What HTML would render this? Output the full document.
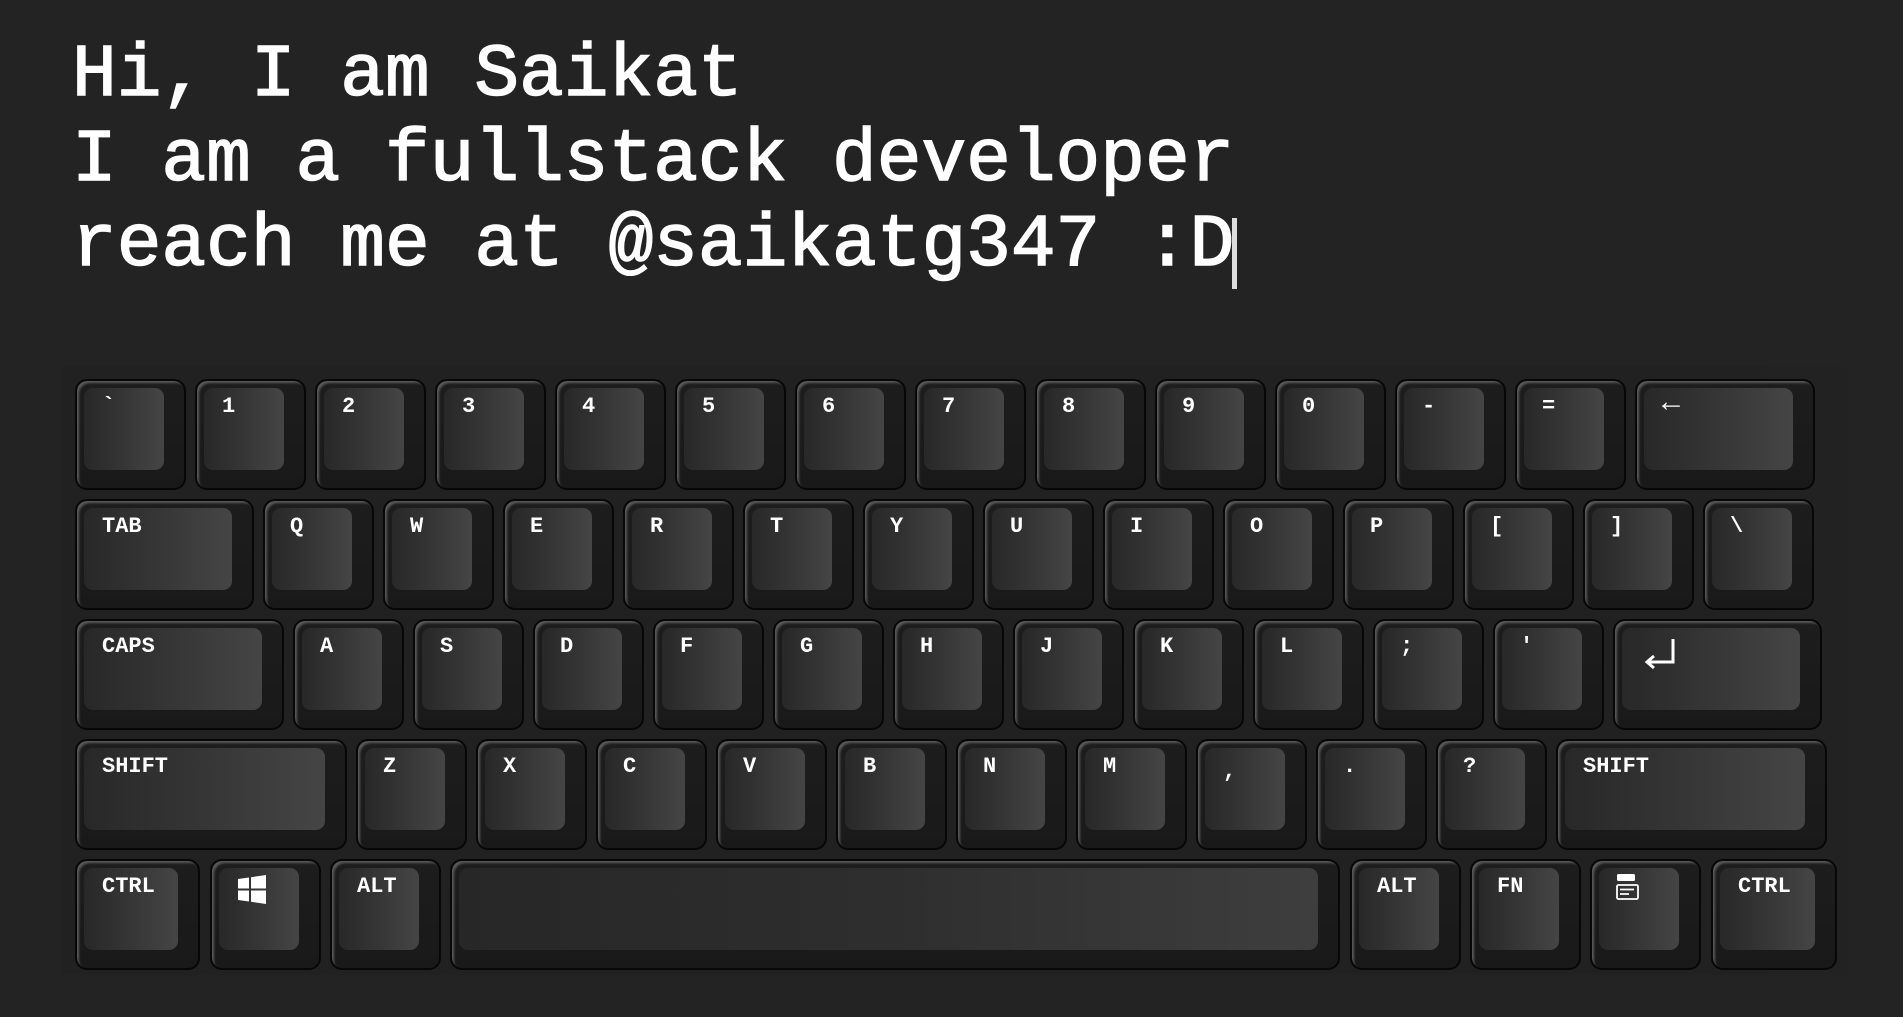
<!DOCTYPE html>
<html><head><meta charset="utf-8"><style>
html,body{margin:0;padding:0;background:#232323;width:1903px;height:1017px;overflow:hidden}
.txt{position:absolute;left:72px;top:34px;font-family:"Liberation Mono",monospace;font-weight:normal;font-size:74.5px;line-height:85px;color:#fff;white-space:pre;-webkit-text-stroke:1.5px #fff}
.cur{position:absolute;left:1232px;top:218px;width:5px;height:71px;background:#ddd}
.board{position:absolute;left:62px;top:366px;width:1808px;height:609px;background:linear-gradient(90deg,#212121 0%,#212121 93%,#232323 100%)}
.k{position:absolute;height:111px;box-sizing:border-box;border:2px solid #070707;border-radius:12px;background:linear-gradient(180deg,#1d1d1d,#191919);box-shadow:inset 3px 3px 2px -1px #5a5a5a}
.c{position:absolute;left:7px;top:7px;right:20px;bottom:18px;border-radius:9px;background:linear-gradient(90deg,#282828,#333 40%,#454545)}
.l{position:absolute;left:25px;top:15px;font-family:"Liberation Mono",monospace;font-weight:bold;font-size:22px;line-height:22px;color:#fff;white-space:pre}
</style></head><body>
<div class="txt">Hi, I am Saikat
I am a fullstack developer
reach me at @saikatg347 :D</div>
<div class="cur"></div>
<div class="board"></div>

<div class="k" style="top:379px;left:75px;width:111px"><div class="c"></div><div class="l">`</div></div>
<div class="k" style="top:379px;left:195px;width:111px"><div class="c"></div><div class="l">1</div></div>
<div class="k" style="top:379px;left:315px;width:111px"><div class="c"></div><div class="l">2</div></div>
<div class="k" style="top:379px;left:435px;width:111px"><div class="c"></div><div class="l">3</div></div>
<div class="k" style="top:379px;left:555px;width:111px"><div class="c"></div><div class="l">4</div></div>
<div class="k" style="top:379px;left:675px;width:111px"><div class="c"></div><div class="l">5</div></div>
<div class="k" style="top:379px;left:795px;width:111px"><div class="c"></div><div class="l">6</div></div>
<div class="k" style="top:379px;left:915px;width:111px"><div class="c"></div><div class="l">7</div></div>
<div class="k" style="top:379px;left:1035px;width:111px"><div class="c"></div><div class="l">8</div></div>
<div class="k" style="top:379px;left:1155px;width:111px"><div class="c"></div><div class="l">9</div></div>
<div class="k" style="top:379px;left:1275px;width:111px"><div class="c"></div><div class="l">0</div></div>
<div class="k" style="top:379px;left:1395px;width:111px"><div class="c"></div><div class="l">-</div></div>
<div class="k" style="top:379px;left:1515px;width:111px"><div class="c"></div><div class="l">=</div></div>
<div class="k" style="top:379px;left:1635px;width:180px"><div class="c"></div><div class="l" style="font-size:30px;font-weight:normal;top:12px">←</div></div>

<div class="k" style="top:499px;left:75px;width:179px"><div class="c"></div><div class="l">TAB</div></div>
<div class="k" style="top:499px;left:263px;width:111px"><div class="c"></div><div class="l">Q</div></div>
<div class="k" style="top:499px;left:383px;width:111px"><div class="c"></div><div class="l">W</div></div>
<div class="k" style="top:499px;left:503px;width:111px"><div class="c"></div><div class="l">E</div></div>
<div class="k" style="top:499px;left:623px;width:111px"><div class="c"></div><div class="l">R</div></div>
<div class="k" style="top:499px;left:743px;width:111px"><div class="c"></div><div class="l">T</div></div>
<div class="k" style="top:499px;left:863px;width:111px"><div class="c"></div><div class="l">Y</div></div>
<div class="k" style="top:499px;left:983px;width:111px"><div class="c"></div><div class="l">U</div></div>
<div class="k" style="top:499px;left:1103px;width:111px"><div class="c"></div><div class="l">I</div></div>
<div class="k" style="top:499px;left:1223px;width:111px"><div class="c"></div><div class="l">O</div></div>
<div class="k" style="top:499px;left:1343px;width:111px"><div class="c"></div><div class="l">P</div></div>
<div class="k" style="top:499px;left:1463px;width:111px"><div class="c"></div><div class="l">[</div></div>
<div class="k" style="top:499px;left:1583px;width:111px"><div class="c"></div><div class="l">]</div></div>
<div class="k" style="top:499px;left:1703px;width:111px"><div class="c"></div><div class="l">\</div></div>

<div class="k" style="top:619px;left:75px;width:209px"><div class="c"></div><div class="l">CAPS</div></div>
<div class="k" style="top:619px;left:293px;width:111px"><div class="c"></div><div class="l">A</div></div>
<div class="k" style="top:619px;left:413px;width:111px"><div class="c"></div><div class="l">S</div></div>
<div class="k" style="top:619px;left:533px;width:111px"><div class="c"></div><div class="l">D</div></div>
<div class="k" style="top:619px;left:653px;width:111px"><div class="c"></div><div class="l">F</div></div>
<div class="k" style="top:619px;left:773px;width:111px"><div class="c"></div><div class="l">G</div></div>
<div class="k" style="top:619px;left:893px;width:111px"><div class="c"></div><div class="l">H</div></div>
<div class="k" style="top:619px;left:1013px;width:111px"><div class="c"></div><div class="l">J</div></div>
<div class="k" style="top:619px;left:1133px;width:111px"><div class="c"></div><div class="l">K</div></div>
<div class="k" style="top:619px;left:1253px;width:111px"><div class="c"></div><div class="l">L</div></div>
<div class="k" style="top:619px;left:1373px;width:111px"><div class="c"></div><div class="l">;</div></div>
<div class="k" style="top:619px;left:1493px;width:111px"><div class="c"></div><div class="l">'</div></div>
<div class="k" style="top:619px;left:1613px;width:209px"><div class="c"></div>
<svg style="position:absolute;left:28px;top:16px" width="34" height="32" viewBox="0 0 34 32"><path d="M30 2 V25 H5 M11 19 L4 25 L11 31" fill="none" stroke="#fff" stroke-width="3"/></svg></div>

<div class="k" style="top:739px;left:75px;width:272px"><div class="c"></div><div class="l">SHIFT</div></div>
<div class="k" style="top:739px;left:356px;width:111px"><div class="c"></div><div class="l">Z</div></div>
<div class="k" style="top:739px;left:476px;width:111px"><div class="c"></div><div class="l">X</div></div>
<div class="k" style="top:739px;left:596px;width:111px"><div class="c"></div><div class="l">C</div></div>
<div class="k" style="top:739px;left:716px;width:111px"><div class="c"></div><div class="l">V</div></div>
<div class="k" style="top:739px;left:836px;width:111px"><div class="c"></div><div class="l">B</div></div>
<div class="k" style="top:739px;left:956px;width:111px"><div class="c"></div><div class="l">N</div></div>
<div class="k" style="top:739px;left:1076px;width:111px"><div class="c"></div><div class="l">M</div></div>
<div class="k" style="top:739px;left:1196px;width:111px"><div class="c"></div><div class="l" style="top:20px">,</div></div>
<div class="k" style="top:739px;left:1316px;width:111px"><div class="c"></div><div class="l">.</div></div>
<div class="k" style="top:739px;left:1436px;width:111px"><div class="c"></div><div class="l">?</div></div>
<div class="k" style="top:739px;left:1556px;width:271px"><div class="c"></div><div class="l">SHIFT</div></div>

<div class="k" style="top:859px;left:75px;width:125px"><div class="c"></div><div class="l">CTRL</div></div>
<div class="k" style="top:859px;left:210px;width:111px"><div class="c"></div>
<svg style="position:absolute;left:25px;top:14px" width="30" height="30" viewBox="0 0 30 30"><path d="M1 4 L12 2.5 V13.5 H1 Z M14 2.2 L29 0 V13.5 H14 Z M1 15.5 H12 V26.5 L1 25 Z M14 15.5 H29 V29 L14 26.8 Z" fill="#fff"/></svg></div>
<div class="k" style="top:859px;left:330px;width:111px"><div class="c"></div><div class="l">ALT</div></div>
<div class="k" style="top:859px;left:450px;width:890px"><div class="c" style="background:linear-gradient(90deg,#272727,#2e2e2e 50%,#3e3e3e)"></div></div>
<div class="k" style="top:859px;left:1350px;width:111px"><div class="c"></div><div class="l">ALT</div></div>
<div class="k" style="top:859px;left:1470px;width:111px"><div class="c"></div><div class="l">FN</div></div>
<div class="k" style="top:859px;left:1590px;width:111px"><div class="c"></div>
<svg style="position:absolute;left:24px;top:12px" width="24" height="28" viewBox="0 0 24 28"><rect x="1" y="1" width="18" height="7" rx="1.5" fill="#fff"/><rect x="1" y="12" width="21" height="14" rx="1.5" fill="none" stroke="#fff" stroke-width="1.8"/><path d="M4 16.5 H18 M4 21 H13" stroke="#fff" stroke-width="1.8"/></svg></div>
<div class="k" style="top:859px;left:1711px;width:126px"><div class="c"></div><div class="l">CTRL</div></div>
</body></html>
